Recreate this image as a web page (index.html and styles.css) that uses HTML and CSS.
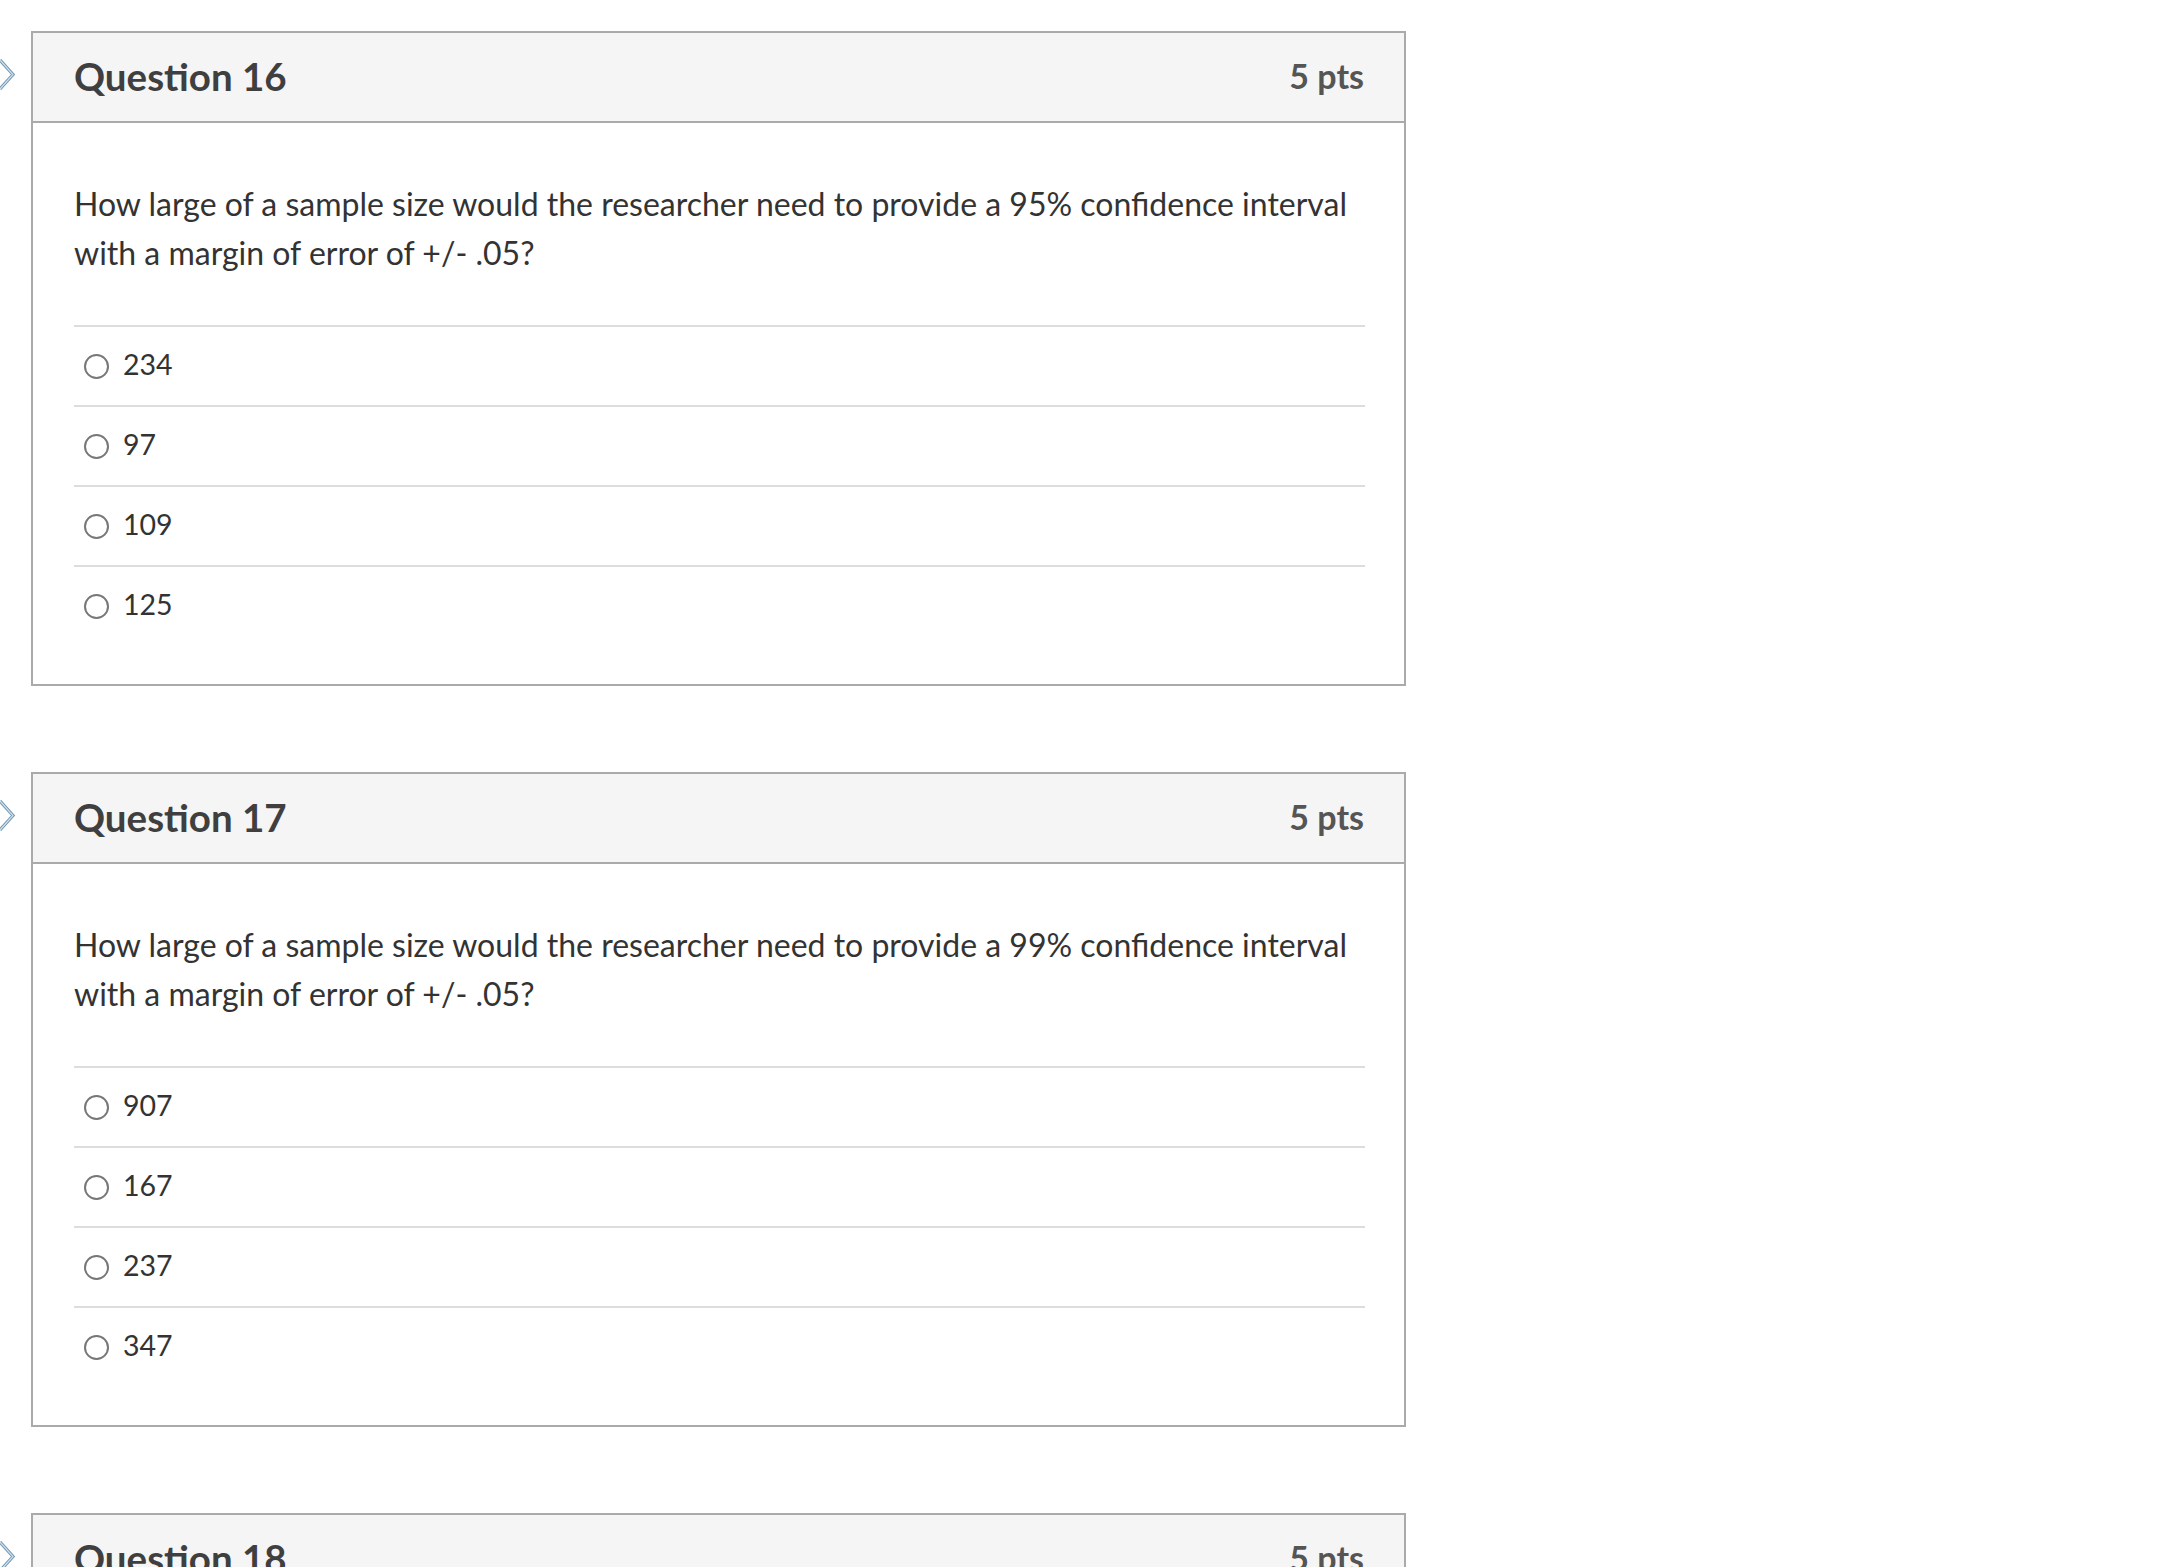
FILE: index.html
```html
<!DOCTYPE html>
<html lang="en">
<head>
<meta charset="utf-8">
<title>Quiz</title>
<link rel="stylesheet" href="styles.css">
</head>
<body>
<main class="quiz">
  <div class="q-row">
    <div class="gutter">
      <svg class="chev" width="16" height="32" viewBox="0 0 16 32"><path d="M0 1 L13 15.5 L0 30" fill="none" stroke="#6f97b3" stroke-width="3.2" stroke-linejoin="miter"/><path d="M0 1 L13 15.5 L0 30" fill="none" stroke="#cfe0ec" stroke-width="1.2"/></svg>
    </div>
    <section class="card">
      <header class="card-head"><h2 class="title">Question 16</h2><span class="pts">5 pts</span></header>
      <div class="card-body">
        <p class="prompt">How large of a sample size would the researcher need to provide a 95% confidence interval with a margin of error of +/- .05?</p>
        <ul class="answers">
          <li class="answer"><span class="radio"></span><span class="answer-text">234</span></li>
          <li class="answer"><span class="radio"></span><span class="answer-text">97</span></li>
          <li class="answer"><span class="radio"></span><span class="answer-text">109</span></li>
          <li class="answer"><span class="radio"></span><span class="answer-text">125</span></li>
        </ul>
      </div>
    </section>
  </div>
  <div class="q-row">
    <div class="gutter">
      <svg class="chev" width="16" height="32" viewBox="0 0 16 32"><path d="M0 1 L13 15.5 L0 30" fill="none" stroke="#6f97b3" stroke-width="3.2"/><path d="M0 1 L13 15.5 L0 30" fill="none" stroke="#cfe0ec" stroke-width="1.2"/></svg>
    </div>
    <section class="card">
      <header class="card-head"><h2 class="title">Question 17</h2><span class="pts">5 pts</span></header>
      <div class="card-body">
        <p class="prompt">How large of a sample size would the researcher need to provide a 99% confidence interval with a margin of error of +/- .05?</p>
        <ul class="answers">
          <li class="answer"><span class="radio"></span><span class="answer-text">907</span></li>
          <li class="answer"><span class="radio"></span><span class="answer-text">167</span></li>
          <li class="answer"><span class="radio"></span><span class="answer-text">237</span></li>
          <li class="answer"><span class="radio"></span><span class="answer-text">347</span></li>
        </ul>
      </div>
    </section>
  </div>
  <div class="q-row">
    <div class="gutter">
      <svg class="chev" width="16" height="32" viewBox="0 0 16 32"><path d="M0 1 L13 15.5 L0 30" fill="none" stroke="#6f97b3" stroke-width="3.2"/><path d="M0 1 L13 15.5 L0 30" fill="none" stroke="#cfe0ec" stroke-width="1.2"/></svg>
    </div>
    <section class="card">
      <header class="card-head"><h2 class="title">Question 18</h2><span class="pts">5 pts</span></header>
      <div class="card-body card-body-empty"></div>
    </section>
  </div>
</main>
</body>
</html>
```
FILE: styles.css
```css
html, body {
  margin: 0;
  padding: 0;
  background: #ffffff;
}
body {
  font-family: Lato, "Open Sans", "Liberation Sans", sans-serif;
  color: #333333;
}
.quiz {
  display: flex;
  flex-direction: column;
  gap: 86px;
  padding-top: 31px;
}
.q-row {
  display: flex;
  align-items: flex-start;
}
.gutter {
  width: 31px;
  flex: 0 0 31px;
  padding-top: 28px;
}
.chev {
  display: block;
}
.card {
  box-sizing: border-box;
  width: 1375px;
  border: 2px solid #aaaaaa;
  background: #ffffff;
}
.card-head {
  height: 90px;
  box-sizing: border-box;
  display: flex;
  align-items: center;
  justify-content: space-between;
  padding: 0 40px 2px 41px;
  background: #f5f5f5;
  border-bottom: 2px solid #aaaaaa;
}
.title {
  margin: 0;
  font-size: 38.5px;
  font-weight: 700;
  color: #3f3f3f;
  line-height: 1;
}
.pts {
  font-size: 34px;
  font-weight: 700;
  color: #555555;
  line-height: 1;
}
.card-body {
  padding: 57px 39px 39px 41px;
}
.card-body-empty {
  height: 400px;
}
.prompt {
  margin: 0 0 48px 0;
  font-size: 32px;
  line-height: 48.5px;
  color: #333333;
}
.answers {
  list-style: none;
  margin: 0;
  padding: 0;
}
.answer {
  box-sizing: border-box;
  height: 80px;
  border-top: 2px solid #dddddd;
  display: flex;
  align-items: center;
  gap: 14px;
  padding-left: 10px;
  font-size: 28.5px;
  color: #333333;
}
.answer-text {
  padding-bottom: 4px;
}
.radio {
  box-sizing: border-box;
  width: 25px;
  height: 25px;
  border: 2px solid #777777;
  border-radius: 50%;
  background: #ffffff;
  flex: 0 0 25px;
}
```
